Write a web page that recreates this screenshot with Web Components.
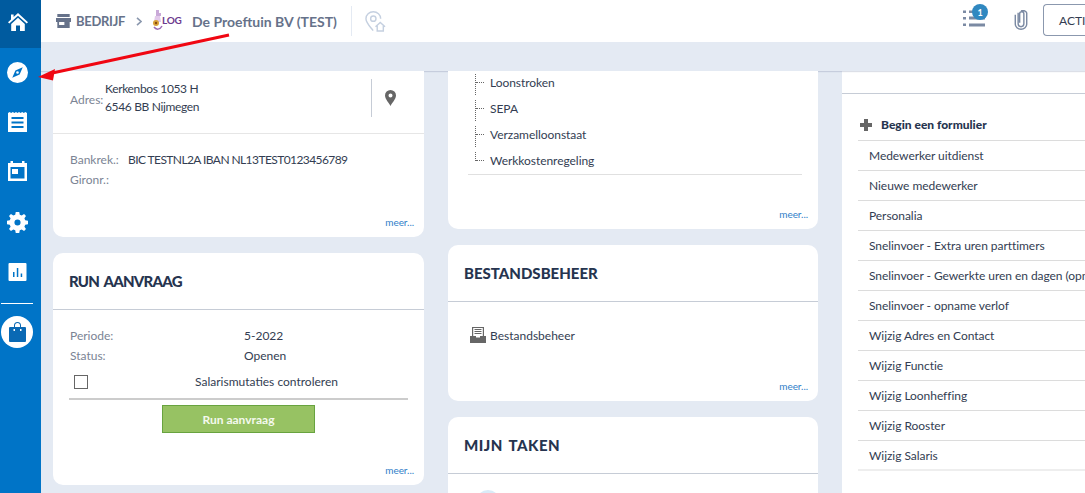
<!DOCTYPE html>
<html lang="nl">
<head>
<meta charset="utf-8">
<title>Bedrijf</title>
<style>
  html, body { margin: 0; height: 100%; overflow: hidden; }
  body { font-family: Lato, "Noto Sans", sans-serif; font-size: 13px; color: #333d52; background: #e4eaf3; }
</style>
</head>
<body>

<app-shell>
  <side-nav slot="nav"></side-nav>
  <top-bar slot="top"></top-bar>

  <page-column>
    <info-card flat more>
      <address-block></address-block>
    </info-card>
    <info-card heading="RUN AANVRAAG" more style="height:232px; --track:-.77px">
      <run-form></run-form>
    </info-card>
  </page-column>

  <page-column>
    <info-card flat more style="height:158px">
      <tree-list></tree-list>
    </info-card>
    <info-card heading="BESTANDSBEHEER" more style="height:156px; --track:0">
      <file-link>Bestandsbeheer</file-link>
    </info-card>
    <info-card heading="MIJN TAKEN" style="height:120px; --track:.5px">
      <task-dot></task-dot>
    </info-card>
  </page-column>

  <page-column>
    <form-list></form-list>
  </page-column>
</app-shell>

<script>
class AppShell extends HTMLElement {
    constructor() {
        super();
        this.attachShadow({ mode: 'open' });
        this.shadowRoot.innerHTML = `
            <style>
                :host { display: grid; grid-template-columns: 41px 1fr; grid-template-rows: 42px 29px 1fr; width: 1085px; height: 493px; position: relative; overflow: hidden; }
                .nav { grid-row: 1 / 4; }
                .strip { position: relative; background: #e4eaf3; box-shadow: 0 1px 1px rgba(60, 80, 120, .18); }
                .content { display: grid; grid-template-columns: 371px 370px 300px; gap: 24px; padding-left: 12px; overflow: hidden; }
                svg { position: absolute; left: 0; top: 0; pointer-events: none; }
            </style>
            <div class="nav"><slot name="nav"></slot></div>
            <slot name="top"></slot>
            <div class="strip"></div>
            <div class="content"><slot></slot></div>
            <svg width="260" height="100" viewBox="0 0 260 100">
                <path d="M229 35 L50 73.5" stroke="#f00712" stroke-width="3" fill="none"/>
                <path d="M38 77 L55 69 L53 80.5 Z" fill="#f00712"/>
            </svg>
        `;
    }
}

class SideNav extends HTMLElement {
    constructor() {
        super();
        this.attachShadow({ mode: 'open' });
        this.shadowRoot.innerHTML = `
            <style>
                :host { display: flex; flex-direction: column; height: 493px; background: #0074c7; }
                .item { height: 50px; display: flex; align-items: center; justify-content: center; flex: none; box-sizing: border-box; padding-right: 6px; }
                .home { height: 48px; background: #005b9f; padding-bottom: 5px; }
                svg { display: block; fill: #fff; }
                hr { width: 32px; margin: 6px 0 0 1px; border: 0; border-top: 1px solid #fff; }
                .bag { width: 32px; height: 32px; border-radius: 50%; background: #fff; display: flex; align-items: center; justify-content: center; margin: 12px 0 0 1px; }
            </style>
            <div class="item home">
                <svg width="20" height="18" viewBox="0 0 20 18"><path d="M10 0 L20 9.2 L18.7 10.6 L10 2.8 L1.3 10.6 L0 9.2 L3 6.5 V1.5 H5.6 V4.1 Z M3.2 11 L10 4.8 L16.8 11 V18 H12 V12.5 H8 V18 H3.2 Z"/></svg>
            </div>
            <div class="item" style="margin-top:-1px">
                <svg width="21" height="21" viewBox="0 0 22 22"><path fill-rule="evenodd" d="M11 0 A11 11 0 1 1 11 22 A11 11 0 1 1 11 0 Z M16.5 5.5 L8.8 8.8 L5.5 16.5 L13.2 13.2 Z M11 9.6 A1.4 1.4 0 1 1 11 12.4 A1.4 1.4 0 1 1 11 9.6 Z"/></svg>
            </div>
            <div class="item">
                <svg width="19" height="20" viewBox="0 0 19 20"><path fill-rule="evenodd" d="M0 1 L1.6 0 L3.2 1 L4.8 0 L6.4 1 L8 0 L9.5 1 L11 0 L12.6 1 L14.2 0 L15.8 1 L17.4 0 L19 1 V20 H0 Z M3.5 5 V7 H15.5 V5 Z M3.5 9.5 V11.5 H15.5 V9.5 Z M3.5 14 V16 H15.5 V14 Z"/></svg>
            </div>
            <div class="item" style="padding-bottom:2px">
                <svg width="19" height="20" viewBox="0 0 19 20"><path fill-rule="evenodd" d="M2.5 0 H5 V2 H14 V0 H16.5 V2 H19 V20 H0 V2 H2.5 Z M2.5 6 V17.5 H16.5 V6 Z M4 8 H10 V13 H4 Z"/></svg>
            </div>
            <div class="item">
                <svg width="21" height="21" viewBox="0 0 24 24"><path fill-rule="evenodd" d="M10 0 H14 L14.6 3.2 L16.8 4.1 L19.5 2.3 L21.7 4.5 L19.9 7.2 L20.8 9.4 L24 10 V14 L20.8 14.6 L19.9 16.8 L21.7 19.5 L19.5 21.7 L16.8 19.9 L14.6 20.8 L14 24 H10 L9.4 20.8 L7.2 19.9 L4.5 21.7 L2.3 19.5 L4.1 16.8 L3.2 14.6 L0 14 V10 L3.2 9.4 L4.1 7.2 L2.3 4.5 L4.5 2.3 L7.2 4.1 L9.4 3.2 Z M12 8.5 A3.5 3.5 0 1 0 12 15.5 A3.5 3.5 0 1 0 12 8.5 Z"/></svg>
            </div>
            <div class="item">
                <svg width="19" height="18" viewBox="0 0 18 18"><path fill-rule="evenodd" d="M0 1 A1 1 0 0 1 1 0 H17 A1 1 0 0 1 18 1 V17 A1 1 0 0 1 17 18 H1 A1 1 0 0 1 0 17 Z M4.5 9 V14 H6 V9 Z M8.3 5 V14 H9.8 V5 Z M12.2 10.5 V14 H13.7 V10.5 Z"/></svg>
            </div>
            <hr>
            <div class="bag">
                <svg width="17" height="20" viewBox="0 0 17 20" style="fill:#0a69b4"><path d="M1 5 H5 V3.5 A3.5 3.5 0 0 1 12 3.5 V5 H16 A1 1 0 0 1 17 6 V19 A1 1 0 0 1 16 20 H1 A1 1 0 0 1 0 19 V6 A1 1 0 0 1 1 5 Z M6 5 H11 V3.5 A2.5 2.5 0 0 0 6 3.5 Z"/><path d="M4.5 7 H6 V9 H4.5 Z M11 7 H12.5 V9 H11 Z" fill="#fff"/></svg>
            </div>
        `;
    }
}

class TopBar extends HTMLElement {
    constructor() {
        super();
        this.attachShadow({ mode: 'open' });
        this.shadowRoot.innerHTML = `
            <style>
                :host { display: flex; align-items: center; height: 42px; background: #fff; padding-left: 15px; color: #66728a; font-weight: 700; position: relative; overflow: hidden; }
                .crumb { font-size: 13px; letter-spacing: -.3px; margin-left: 5px; width: 48px; white-space: nowrap; }
                .chev { margin: 0 10px 0 12px; }
                .logo { width: 30px; display: flex; align-items: center; margin-bottom: 2px; }
                .logo b { font: 700 10px Lato, sans-serif; color: #6d3a8e; margin-left: -1px; letter-spacing: -.2px; }
                .name { font-size: 14px; margin-left: 10px; white-space: nowrap; width: 144px; }
                .sep { width: 1px; height: 30px; background: #e4eaf3; margin: 0 13px 0 15px; }
                .right { margin: 0 -18px 2px auto; display: flex; align-items: center; }
                .tasks { position: relative; width: 22px; height: 24px; }
                .tasks svg { display: block; }
                .badge { position: absolute; left: 9px; top: -4px; width: 16px; height: 16px; border-radius: 50%; background: #3088c0; color: #fff; font-size: 9px; display: flex; align-items: center; justify-content: center; }
                .clip { margin-left: 29px; }
                button { margin-left: 15px; width: 60px; height: 32px; padding: 0 0 0 15px; border: 1px solid #8b98ae; border-right: 0; border-radius: 4px 0 0 4px; background: #fff; color: #333d52; font: 400 12px Lato, sans-serif; text-align: left; overflow: hidden; white-space: nowrap; }
            </style>
            <svg width="15" height="14" viewBox="0 0 17 14" fill="#66728a" preserveAspectRatio="none"><path d="M1.5 0 H15.5 V3 H1.5 Z M0 4 H17 V8 H15.5 V14 H1.5 V8 H0 Z"/><path d="M3.5 8 H9.5 V11 H3.5 Z" fill="#fff"/></svg>
            <span class="crumb">BEDRIJF</span>
            <svg class="chev" width="6" height="9" viewBox="0 0 6 9" fill="none" stroke="#8b98ae" stroke-width="1.6"><path d="M1 .8 L5 4.5 L1 8.2"/></svg>
            <span class="logo">
                <svg width="11" height="20" viewBox="0 0 11 20">
                    <path d="M4 0 H7 V3 H9 V6 H4 Z" fill="#c9a9d8"/>
                    <path d="M3 6 H8 L9 12 H2 Z" fill="#e2c9ea"/>
                    <circle cx="4" cy="13" r="3" fill="#d9a23a"/>
                    <circle cx="4" cy="13" r="1.2" fill="#8a4a10"/>
                    <path d="M2 17 C4 20 8 20 10 16" fill="none" stroke="#9a6bb5" stroke-width="1.5"/>
                </svg>
                <b>LOG</b>
            </span>
            <span class="name">De Proeftuin BV (TEST)</span>
            <span class="sep"></span>
            <svg width="21" height="21" viewBox="0 0 22 22" fill="none" stroke="#c5d0e0" stroke-width="1.5"><path d="M8.5 20.5 C5 16 1 12 1 8 A7.7 7.2 0 0 1 16.4 8"/><circle cx="8.7" cy="8" r="2.8"/><path d="M11 16.5 L16 12 L21 16.5 M12.8 15 V21 H19.2 V15"/></svg>
            <div class="right">
                <div class="tasks">
                    <svg width="22" height="24" viewBox="0 0 22 24" fill="#7b8aa3"><path d="M0 2.5 H3 V5 H0 Z M0 9 H3 V11.5 H0 Z M0 15.5 H3 V18 H0 Z M6 2.5 H14 V5 H6 Z M6 8.5 H22 V11.5 H6 Z M6 15.5 H22 V18.5 H6 Z"/></svg>
                    <span class="badge">1</span>
                </div>
                <svg class="clip" width="14" height="20" viewBox="0 0 14 21" fill="none" stroke="#7b8aa3" stroke-width="1.5"><path d="M4 3 V14.5 A3 3 0 0 0 10 14.5 V4 A2.2 2.2 0 0 0 5.6 4 V13.5 M1 5 V15 A6 5.2 0 0 0 13 15 V4 A4 3 0 0 0 7 1"/></svg>
                <button>ACTIES</button>
            </div>
        `;
    }
}

class PageColumn extends HTMLElement {
    constructor() {
        super();
        this.attachShadow({ mode: 'open' });
        this.shadowRoot.innerHTML = `
            <style>:host { display: flex; flex-direction: column; gap: 16px; min-width: 0; }</style>
            <slot></slot>
        `;
    }
}

class InfoCard extends HTMLElement {
    constructor() {
        super();
        this.attachShadow({ mode: 'open' });
        const heading = this.getAttribute('heading');
        this.shadowRoot.innerHTML = `
            <style>
                :host { display: flex; flex-direction: column; flex: none; background: #fff; border-radius: 10px; position: relative; box-sizing: border-box; }
                :host([flat]) { border-radius: 0 0 10px 10px; }
                h2 { margin: 0; height: 57px; padding: 0 16px; display: block; line-height: 56px; box-sizing: border-box; font-size: 15px; font-weight: 900; letter-spacing: var(--track, 0); word-spacing: 2px; color: #26344f; border-bottom: 1px solid #c6ccd6; flex: none; }
                a { position: absolute; right: 10px; bottom: 9px; font-size: 10px; letter-spacing: -.05px; color: #2f80c9; }
            </style>
            ${heading ? `<h2>${heading}</h2>` : ''}
            <slot></slot>
            ${this.hasAttribute('more') ? '<a>meer...</a>' : ''}
        `;
    }
}

class AddressBlock extends HTMLElement {
    constructor() {
        super();
        this.attachShadow({ mode: 'open' });
        this.shadowRoot.innerHTML = `
            <style>
                :host { display: block; height: 166px; font-size: 12px; }
                .top { height: 62px; border-bottom: 1px solid #e6e6e6; display: flex; padding-left: 17px; }
                .label { color: #7b8494; }
                .adr { display: flex; align-items: center; height: 38px; margin-top: 8px; flex: 1; line-height: 18px; letter-spacing: -.35px; }
                .adr .label { margin-top: 4px; margin-right: 2px; width: 33px; letter-spacing: 0; }
                .pin { width: 37px; height: 38px; border-left: 1px solid #c6ccd6; margin: 8px 15px 0 0; display: flex; align-items: center; justify-content: center; }
                .bank { padding: 16px 0 0 17px; line-height: 20px; }
                .bank div { display: flex; }
                .bank .label { width: 58px; }
                .num { letter-spacing: -.58px; }
            </style>
            <div class="top">
                <div class="adr"><span class="label">Adres:</span><span>Kerkenbos 1053 H<br>6546 BB Nijmegen</span></div>
                <div class="pin"><svg width="11" height="16" viewBox="0 0 11 16"><path fill="#666" fill-rule="evenodd" d="M5.5 0 A5.5 5.5 0 0 1 11 5.5 C11 9 7 13 5.5 16 C4 13 0 9 0 5.5 A5.5 5.5 0 0 1 5.5 0 Z M5.5 3.5 A2 2 0 1 0 5.5 7.5 A2 2 0 1 0 5.5 3.5 Z"/></svg></div>
            </div>
            <div class="bank">
                <div><span class="label">Bankrek.:</span><span class="num">BIC TESTNL2A IBAN NL13TEST0123456789</span></div>
                <div><span class="label">Gironr.:</span></div>
            </div>
        `;
    }
}

class RunForm extends HTMLElement {
    constructor() {
        super();
        this.attachShadow({ mode: 'open' });
        this.shadowRoot.innerHTML = `
            <style>
                :host { display: block; padding: 15px 16px 0; font-size: 12px; }
                .row { display: grid; grid-template-columns: 174px 1fr; height: 20px; align-items: center; padding-left: 1px; }
                .label { color: #7b8494; }
                .check { display: grid; grid-template-columns: 15px 1fr; height: 35px; box-sizing: border-box; align-items: center; padding-left: 5px; border-bottom: 2px solid #ccc; }
                .box { width: 12px; height: 12px; border: 1px solid #666; }
                .check span:last-child { text-align: center; padding-left: 36px; }
                button { display: block; width: 153px; height: 28px; margin: 5px auto 0; background: #97c263; border: 1px solid #68a33f; color: #f4f9ee; font: 700 12px Lato, sans-serif; padding: 0; }
            </style>
            <div class="row"><span class="label">Periode:</span><span>5-2022</span></div>
            <div class="row"><span class="label">Status:</span><span>Openen</span></div>
            <div class="check"><span class="box"></span><span>Salarismutaties controleren</span></div>
            <button>Run aanvraag</button>
        `;
    }
}

class TreeList extends HTMLElement {
    constructor() {
        super();
        this.attachShadow({ mode: 'open' });
        const items = ['Loonstroken', 'SEPA', 'Verzamelloonstaat', 'Werkkostenregeling'];
        this.shadowRoot.innerHTML = `
            <style>
                :host { display: block; margin: 0 16px 0 20px; border-bottom: 1px solid #e0e0e0; height: 103px; font-size: 12px; letter-spacing: -.05px; }
                div { height: 26px; display: flex; align-items: center; padding: 0 0 3px 22px; position: relative; box-sizing: border-box; }
                div:first-child { height: 25px; }
                div::before { content: ""; position: absolute; left: 7px; top: 3px; height: 21px; border-left: 1px dotted #666; }
                div::after { content: ""; position: absolute; left: 8px; top: 11px; width: 8px; border-top: 1px dotted #666; }
                div:first-child::before { top: 2px; }
                div:first-child::after { top: 10px; }
                div:last-child::before { height: 9px; }
            </style>
            ${items.map(i => `<div>${i}</div>`).join('')}
        `;
    }
}

class FileLink extends HTMLElement {
    constructor() {
        super();
        this.attachShadow({ mode: 'open' });
        this.shadowRoot.innerHTML = `
            <style>
                :host { display: flex; align-items: center; gap: 4px; padding: 25px 0 0 22px; font-size: 12px; }
            </style>
            <svg width="16" height="16" viewBox="0 0 16 16"><path fill="#666" d="M2 0 H14 V9 H16 V16 H0 V9 H2 Z"/><path fill="#fff" d="M3.2 1 H12.8 V9 H10 V10.5 H6 V9 H3.2 Z"/><path stroke="#666" d="M4.5 2.5 H11.5 M4.5 4.5 H11.5 M4.5 6.5 H11.5"/></svg>
            <slot></slot>
        `;
    }
}

class TaskDot extends HTMLElement {
    constructor() {
        super();
        this.attachShadow({ mode: 'open' });
        this.shadowRoot.innerHTML = `
            <style>
                :host { display: block; width: 24px; height: 24px; border-radius: 50%; background: #d9ebf7; margin: 16px 0 0 28px; }
            </style>
        `;
    }
}

class FormList extends HTMLElement {
    constructor() {
        super();
        this.attachShadow({ mode: 'open' });
        const items = ['Medewerker uitdienst', 'Nieuwe medewerker', 'Personalia', 'Snelinvoer - Extra uren parttimers',
            'Snelinvoer - Gewerkte uren en dagen (opname verlof)', 'Snelinvoer - opname verlof', 'Wijzig Adres en Contact',
            'Wijzig Functie', 'Wijzig Loonheffing', 'Wijzig Rooster', 'Wijzig Salaris'];
        this.shadowRoot.innerHTML = `
            <style>
                :host { display: block; height: 440px; background: #fff; font-size: 12px; letter-spacing: -.05px; }
                .spacer { height: 22px; border-bottom: 1px solid #c6ccd6; }
                .list { margin: 15px 0 0 16px; }
                .title { height: 31px; display: flex; align-items: center; gap: 9px; font-weight: 900; color: #26344f; padding-left: 2px; letter-spacing: 0; }
                .row { height: 29px; border-top: 1px solid #dcdcdc; display: flex; align-items: center; padding-left: 11px; white-space: nowrap; }
                .end { border-top: 2px solid #eee; margin-top: -1px; }
            </style>
            <div class="spacer"></div>
            <div class="list">
                <div class="title"><svg width="12" height="12" viewBox="0 0 12 12"><path fill="#666" d="M4 0 H8 V4 H12 V8 H8 V12 H4 V8 H0 V4 H4 Z"/></svg>Begin een formulier</div>
                ${items.map(i => `<div class="row">${i}</div>`).join('')}
                <div class="end"></div>
            </div>
        `;
    }
}

customElements.define('app-shell', AppShell);
customElements.define('side-nav', SideNav);
customElements.define('top-bar', TopBar);
customElements.define('page-column', PageColumn);
customElements.define('info-card', InfoCard);
customElements.define('address-block', AddressBlock);
customElements.define('run-form', RunForm);
customElements.define('tree-list', TreeList);
customElements.define('file-link', FileLink);
customElements.define('task-dot', TaskDot);
customElements.define('form-list', FormList);
</script>
</body>
</html>
